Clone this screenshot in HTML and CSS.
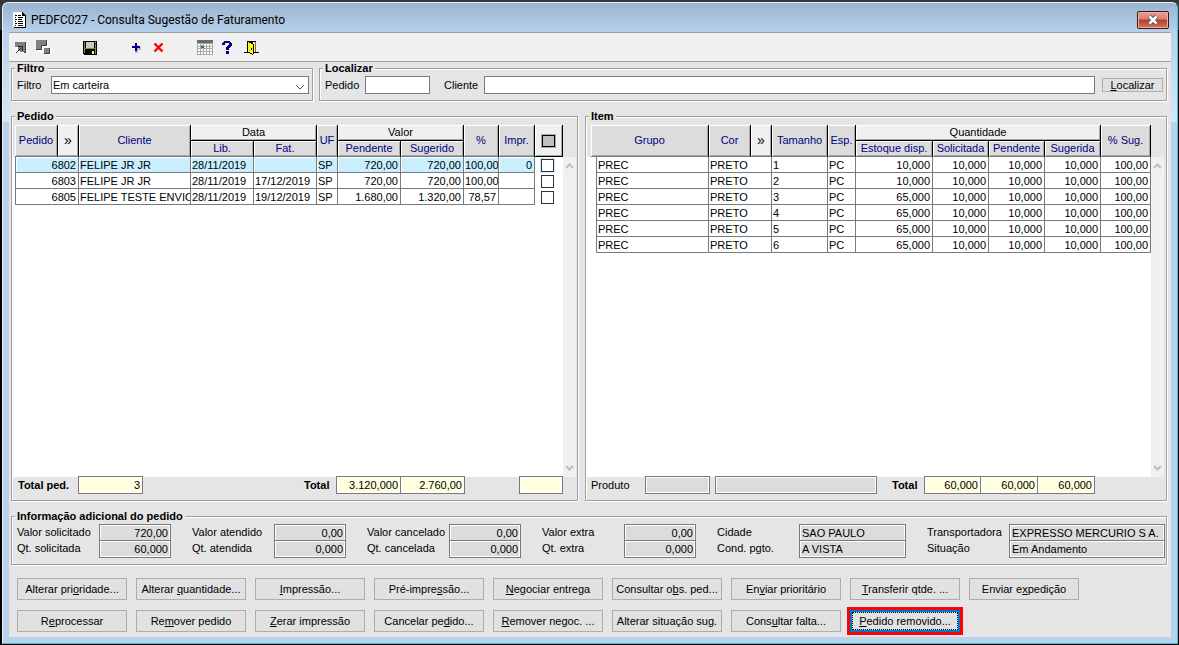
FILE: index.html
```html
<!DOCTYPE html>
<html lang="pt-BR">
<head>
    <meta charset="UTF-8">
    <meta name="viewport" content="width=device-width, initial-scale=1.0">
    <title>PEDFC027 - Consulta Sugestão de Faturamento</title>
    <link rel="stylesheet" href="styles.css">
</head>
<body>
    <div class="window">
        <header class="titlebar">
            <svg class="app-icon" width="13" height="16" viewBox="0 0 13 16" shape-rendering="crispEdges">
                <path d="M0 0h9l3 3v12H0z" fill="#fff"/>
                <path d="M9 0h1v1h1v1h1v1h1v13H1v-1h11V4H9z" fill="#000"/>
                <path d="M2 3h2v1H2zM5 3h3v1H5zM2 5h1v1H2zM5 5h5v1H5zM2 7h2v1H2zM5 7h4v1H5zM2 9h1v1H2zM5 9h5v1H5zM2 11h2v1H2zM5 11h5v1H5zM2 13h1v1H2zM5 13h5v1H5z" fill="#000"/>
            </svg>
            <h1>PEDFC027 - Consulta Sugestão de Faturamento</h1>
            <button class="close" aria-label="Fechar">
                <svg width="12" height="10" viewBox="0 0 12 10">
                    <path d="M2.500 1.500l7 7M9.500 1.500l-7 7" stroke="#4a5260" stroke-width="4.500"/>
                    <path d="M2.500 1.500l7 7M9.500 1.500l-7 7" stroke="#fff" stroke-width="2.500"/>
                </svg>
            </button>
        </header>

        <main class="client">
            <div class="toolbar">
                <div class="tool-group">
                    <button aria-label="Minimizar">
                        <svg viewBox="0 0 16 16" shape-rendering="crispEdges">
                            <path d="M3 3h11v11h-3v-1H3z" fill="#fff"/>
                            <path d="M2 2h11v11h-2l-1-1H7L2 7z" fill="#808080"/>
                            <path d="M12 2h1v11h-2v-1h1z" fill="#404040"/>
                            <path d="M3 12h1v1H3zM4 11h1v1H4zM5 10h1v1H5zM6 9h1v1H6zM7 8h1v1H7zM5 6h5v5H9V7H5z" fill="#202020"/>
                            <path d="M2 7h3v3H2zM4 12h1v1H4zM5 11h1v1H5z" fill="#fff"/>
                        </svg>
                    </button>
                    <button aria-label="Restaurar">
                        <svg viewBox="0 0 16 16" shape-rendering="crispEdges">
                            <path d="M1 1h11v6H7v5H1z" fill="#fff"/>
                            <path d="M0 0h11v6H6v4H0z" fill="#808080"/>
                            <path d="M10 0h1v6H6v4H0V9h5V5h5z" fill="#404040"/>
                            <path d="M9 9h7v6H9z" fill="#fff"/>
                            <path d="M8 8h6v6H8z" fill="#808080"/>
                            <path d="M13 8h1v6H8v-1h5z" fill="#404040"/>
                        </svg>
                    </button>
                </div>
                <div class="tool-group">
                    <button aria-label="Salvar">
                        <svg viewBox="0 0 16 16" shape-rendering="crispEdges">
                            <path d="M1 1h14v14H2l-1-1z" fill="#000"/>
                            <path d="M2 2h1v11H2zM13 4h1v10h-1zM3 8h10v1H3z" fill="#8c8c10"/>
                            <path d="M4 2h8v6H4z" fill="#c8c8c8"/>
                            <path d="M13 2h1v1h-1zM10 11h2v3h-2z" fill="#e8e8e8"/>
                        </svg>
                    </button>
                </div>
                <div class="tool-group">
                    <button aria-label="Incluir">
                        <svg viewBox="0 0 16 16" shape-rendering="crispEdges">
                            <path d="M8 5h2v2h3v3h-3v3H7v-2h1z" fill="#b4b4b4"/>
                            <path d="M7 3h2v3h3v2H9v3H7V8H4V6h3z" fill="#000080"/>
                        </svg>
                    </button>
                    <button aria-label="Excluir">
                        <svg viewBox="0 0 16 16">
                            <path d="M3.500 3.500l8 8M11.500 3.500l-8 8" stroke="#f00" stroke-width="2.400"/>
                        </svg>
                    </button>
                </div>
                <div class="tool-group">
                    <button aria-label="Calendário">
                        <svg viewBox="0 0 16 16" shape-rendering="crispEdges">
                            <path d="M0 3h16v12H0z" fill="#a8a8a8"/>
                            <path d="M0 0h16v3H0z" fill="#696969"/>
                            <path d="M1 4h2v2H1zM4 4h2v1H4zM7 4h2v2H7zM10 4h2v2h-2zM13 4h2v2h-2zM1 7h2v1H1zM7 7h2v1H7zM10 7h2v1h-2zM13 7h2v1h-2zM1 9h2v2H1zM4 9h2v2H4zM7 9h2v2H7zM10 9h2v2h-2zM13 9h2v2h-2zM1 12h2v2H1zM4 12h2v2H4zM7 12h2v2H7zM10 12h2v2h-2zM13 12h2v2h-2z" fill="#fff"/>
                            <path d="M4 6h3v2H4z" fill="#1d6fa4"/>
                        </svg>
                    </button>
                    <button aria-label="Ajuda">
                        <svg viewBox="0 0 16 16" shape-rendering="crispEdges">
                            <path d="M4 1h6v1h1v1h1v3h-1v1h-1v1H9v2H6V7h1V6h1V5h1V3H5v2H2V3h1V2h1zM6 11h3v3H6z" fill="#000080"/>
                        </svg>
                    </button>
                    <button aria-label="Sair">
                        <svg viewBox="0 0 16 16" shape-rendering="crispEdges">
                            <path d="M4 1h9v11h3v1H10v2H9v-1H7v-1H1v-1h3z" fill="#000"/>
                            <path d="M10 2h2v10h-2z" fill="#f0f0f0"/>
                            <path d="M12 2h1v10h-1z" fill="#808000"/>
                            <path d="M5 2h1v1h2v1h2v10H9v-1H7v-1H5z" fill="#ff0"/>
                            <path d="M10 4h1v10h-1zM8 8h1v2H8z" fill="#000"/>
                        </svg>
                    </button>
                </div>
            </div>

            <div class="content">
                <div class="search-row">
                    <fieldset class="search">
                        <legend>Filtro</legend>
                        <label class="w-filter" for="filtro">Filtro</label>
                        <div class="select-wrap">
                            <select id="filtro">
                                <option>Em carteira</option>
                            </select>
                            <svg width="10" height="6" viewBox="0 0 10 6"><path d="M1 1l4 4 4-4" fill="none" stroke="#555"/></svg>
                        </div>
                    </fieldset>
                    <fieldset class="search">
                        <legend>Localizar</legend>
                        <label class="w-order" for="pedido">Pedido</label>
                        <input class="box-order" id="pedido" type="text">
                        <label class="w-client" for="cliente">Cliente</label>
                        <input class="box-client" id="cliente" type="text">
                        <button class="btn find"><span><u>L</u>ocalizar</span></button>
                    </fieldset>
                </div>

                <div class="panels">
                    <fieldset class="panel orders">
                        <legend>Pedido</legend>
                        <div class="grid-area">
                            <div class="table-wrap">
                                <table>
                                    <colgroup>
                                        <col style="width: 43px"><col style="width: 21px"><col style="width: 112px"><col style="width: 63px"><col style="width: 63px"><col style="width: 21px"><col style="width: 63px"><col style="width: 63px"><col style="width: 35px"><col style="width: 36px"><col style="width: 28px">
                                    </colgroup>
                                    <thead>
                                        <tr>
                                            <th rowspan="2">Pedido</th>
                                            <th rowspan="2" class="light arrows">»</th>
                                            <th rowspan="2">Cliente</th>
                                            <th colspan="2" class="light top">Data</th>
                                            <th rowspan="2">UF</th>
                                            <th colspan="2" class="light top">Valor</th>
                                            <th rowspan="2">%</th>
                                            <th rowspan="2">Impr.</th>
                                            <th rowspan="2" class="light end"><input type="checkbox" class="check-all" aria-label="Selecionar todos"></th>
                                        </tr>
                                        <tr>
                                            <th>Lib.</th>
                                            <th>Fat.</th>
                                            <th>Pendente</th>
                                            <th>Sugerido</th>
                                        </tr>
                                    </thead>
                                    <tbody>
                                        <tr class="selected">
                                            <td colspan="2" class="num first">6802</td><td>FELIPE JR JR</td><td>28/11/2019</td><td></td><td>SP</td><td class="num">720,00</td><td class="num">720,00</td><td class="num">100,00</td><td class="num">0</td>
                                            <td class="check"><input type="checkbox" aria-label="Pedido 6802"></td>
                                        </tr>
                                        <tr>
                                            <td colspan="2" class="num first">6803</td><td>FELIPE JR JR</td><td>28/11/2019</td><td>17/12/2019</td><td>SP</td><td class="num">720,00</td><td class="num">720,00</td><td class="num">100,00</td><td class="num"></td>
                                            <td class="check"><input type="checkbox" aria-label="Pedido 6803"></td>
                                        </tr>
                                        <tr>
                                            <td colspan="2" class="num first">6805</td><td>FELIPE TESTE ENVIO C</td><td>28/11/2019</td><td>19/12/2019</td><td>SP</td><td class="num">1.680,00</td><td class="num">1.320,00</td><td class="num">78,57</td><td class="num"></td>
                                            <td class="check"><input type="checkbox" aria-label="Pedido 6805"></td>
                                        </tr>
                                    </tbody>
                                </table>
                            </div>
                            <div class="scroll">
                                <svg width="9" height="6" viewBox="0 0 9 6"><path d="M1 5l3.500-3.500L8 5" fill="none" stroke="#bfbfbf" stroke-width="2"/></svg>
                                <svg width="9" height="6" viewBox="0 0 9 6"><path d="M1 1l3.500 3.500L8 1" fill="none" stroke="#bfbfbf" stroke-width="2"/></svg>
                            </div>
                        </div>
                        <div class="totals">
                            <label class="bold w-total-orders" for="total-ped">Total ped.</label>
                            <input class="box-count num" id="total-ped" type="text" value="3" readonly>
                            <label class="bold push" for="total-pend">Total</label>
                            <input class="box-value num" id="total-pend" type="text" value="3.120,000" readonly>
                            <input class="box-value num joined" type="text" value="2.760,00" aria-label="Total sugerido" readonly>
                            <input class="box-marked num" type="text" aria-label="Total marcado" readonly>
                        </div>
                    </fieldset>

                    <fieldset class="panel items">
                        <legend>Item</legend>
                        <div class="grid-area">
                            <div class="table-wrap">
                                <table>
                                    <colgroup>
                                        <col style="width: 5px"><col style="width: 113px"><col style="width: 42px"><col style="width: 21px"><col style="width: 56px"><col style="width: 28px"><col style="width: 77px"><col style="width: 56px"><col style="width: 56px"><col style="width: 56px"><col style="width: 50px">
                                    </colgroup>
                                    <thead>
                                        <tr>
                                            <th rowspan="2" colspan="2">Grupo</th>
                                            <th rowspan="2">Cor</th>
                                            <th rowspan="2" class="light arrows">»</th>
                                            <th rowspan="2">Tamanho</th>
                                            <th rowspan="2">Esp.</th>
                                            <th colspan="4" class="light top">Quantidade</th>
                                            <th rowspan="2">% Sug.</th>
                                        </tr>
                                        <tr>
                                            <th>Estoque disp.</th>
                                            <th>Solicitada</th>
                                            <th>Pendente</th>
                                            <th>Sugerida</th>
                                        </tr>
                                    </thead>
                                    <tbody>
                                        <tr><td class="blank"></td><td class="first">PREC</td><td colspan="2">PRETO</td><td>1</td><td>PC</td><td class="num">10,000</td><td class="num">10,000</td><td class="num">10,000</td><td class="num">10,000</td><td class="num">100,00</td></tr>
                                        <tr><td class="blank"></td><td class="first">PREC</td><td colspan="2">PRETO</td><td>2</td><td>PC</td><td class="num">10,000</td><td class="num">10,000</td><td class="num">10,000</td><td class="num">10,000</td><td class="num">100,00</td></tr>
                                        <tr><td class="blank"></td><td class="first">PREC</td><td colspan="2">PRETO</td><td>3</td><td>PC</td><td class="num">65,000</td><td class="num">10,000</td><td class="num">10,000</td><td class="num">10,000</td><td class="num">100,00</td></tr>
                                        <tr><td class="blank"></td><td class="first">PREC</td><td colspan="2">PRETO</td><td>4</td><td>PC</td><td class="num">65,000</td><td class="num">10,000</td><td class="num">10,000</td><td class="num">10,000</td><td class="num">100,00</td></tr>
                                        <tr><td class="blank"></td><td class="first">PREC</td><td colspan="2">PRETO</td><td>5</td><td>PC</td><td class="num">65,000</td><td class="num">10,000</td><td class="num">10,000</td><td class="num">10,000</td><td class="num">100,00</td></tr>
                                        <tr><td class="blank"></td><td class="first">PREC</td><td colspan="2">PRETO</td><td>6</td><td>PC</td><td class="num">65,000</td><td class="num">10,000</td><td class="num">10,000</td><td class="num">10,000</td><td class="num">100,00</td></tr>
                                    </tbody>
                                </table>
                            </div>
                            <div class="scroll">
                                <svg width="9" height="6" viewBox="0 0 9 6"><path d="M1 5l3.500-3.500L8 5" fill="none" stroke="#bfbfbf" stroke-width="2"/></svg>
                                <svg width="9" height="6" viewBox="0 0 9 6"><path d="M1 1l3.500 3.500L8 1" fill="none" stroke="#bfbfbf" stroke-width="2"/></svg>
                            </div>
                        </div>
                        <div class="totals">
                            <label class="w-product" for="produto">Produto</label>
                            <input class="box-count gray" id="produto" type="text" readonly>
                            <input class="box-product gray" type="text" aria-label="Descrição do produto" readonly>
                            <label class="bold w-total-items" for="total-sol">Total</label>
                            <input class="box-qty num" id="total-sol" type="text" value="60,000" readonly>
                            <input class="box-qty num joined" type="text" value="60,000" aria-label="Total pendente" readonly>
                            <input class="box-qty num joined" type="text" value="60,000" aria-label="Total sugerida" readonly>
                        </div>
                    </fieldset>
                </div>

                <fieldset class="info">
                    <legend>Informação adicional do pedido</legend>
                    <div class="info-group">
                        <label for="v-sol">Valor solicitado</label><input class="gray num" id="v-sol" type="text" value="720,00" readonly>
                        <label for="q-sol">Qt. solicitada</label><input class="gray num" id="q-sol" type="text" value="60,000" readonly>
                    </div>
                    <div class="info-group">
                        <label for="v-ate">Valor atendido</label><input class="gray num" id="v-ate" type="text" value="0,00" readonly>
                        <label for="q-ate">Qt. atendida</label><input class="gray num" id="q-ate" type="text" value="0,000" readonly>
                    </div>
                    <div class="info-group">
                        <label for="v-can">Valor cancelado</label><input class="gray num" id="v-can" type="text" value="0,00" readonly>
                        <label for="q-can">Qt. cancelada</label><input class="gray num" id="q-can" type="text" value="0,000" readonly>
                    </div>
                    <div class="info-group">
                        <label for="v-ext">Valor extra</label><input class="gray num" id="v-ext" type="text" value="0,00" readonly>
                        <label for="q-ext">Qt. extra</label><input class="gray num" id="q-ext" type="text" value="0,000" readonly>
                    </div>
                    <div class="info-group">
                        <label for="cidade">Cidade</label><input class="gray" id="cidade" type="text" value="SAO PAULO" readonly>
                        <label for="cond">Cond. pgto.</label><input class="gray" id="cond" type="text" value="A VISTA" readonly>
                    </div>
                    <div class="info-group">
                        <label for="transp">Transportadora</label><input class="gray" id="transp" type="text" value="EXPRESSO MERCURIO S A." readonly>
                        <label for="situacao">Situação</label><input class="gray" id="situacao" type="text" value="Em Andamento" readonly>
                    </div>
                </fieldset>

                <div class="actions">
                    <button class="btn"><span>Alterar pri<u>o</u>ridade...</span></button>
                    <button class="btn"><span>Alterar <u>q</u>uantidade...</span></button>
                    <button class="btn"><span><u>I</u>mpressão...</span></button>
                    <button class="btn"><span>Pré-impre<u>s</u>são...</span></button>
                    <button class="btn"><span><u>N</u>egociar entrega</span></button>
                    <button class="btn"><span>Consultar o<u>b</u>s. ped...</span></button>
                    <button class="btn"><span>En<u>v</u>iar prioritário</span></button>
                    <button class="btn"><span><u>T</u>ransferir qtde. ...</span></button>
                    <button class="btn"><span>Enviar e<u>x</u>pedição</span></button>
                    <button class="btn"><span>R<u>e</u>processar</span></button>
                    <button class="btn"><span>Re<u>m</u>over pedido</span></button>
                    <button class="btn"><span><u>Z</u>erar impressão</span></button>
                    <button class="btn"><span>Cancelar pe<u>d</u>ido...</span></button>
                    <button class="btn"><span><u>R</u>emover negoc. ...</span></button>
                    <button class="btn"><span>Alterar situação su<u>g</u>.</span></button>
                    <button class="btn"><span>Cons<u>u</u>ltar falta...</span></button>
                    <button class="btn focused"><span><u>P</u>edido removido...</span></button>
                </div>
            </div>
        </main>
    </div>
</body>
</html>
```

FILE: styles.css
```css
* {
    box-sizing: border-box;
}
body {
    margin: 0;
    min-height: 100vh;
    display: flex;
    padding: 2px 1px 1px 2px;
    background: linear-gradient(#383838 30px, #000 30px);
    font-family: "Liberation Sans", Arial, sans-serif;
    font-size: 11px;
    line-height: 13px;
    color: #000;
}
button, input, select {
    font: inherit;
    color: inherit;
    margin: 0;
    border-radius: 0;
}
.window {
    flex: 1;
    min-width: 0;
    display: flex;
    flex-direction: column;
    padding: 0 6px 6px;
    border: 1px solid #e6f0fa;
    border-right-color: #35c5e8;
    border-bottom-color: #35c5e8;
    border-radius: 6px 6px 0 0;
    background: linear-gradient(#99b4d1 0, #b9d1ea 30px, #d7e6f6 119px, #b9d1ea 119px);
}

/* title bar */
.titlebar {
    display: flex;
    align-items: center;
    height: 29px;
    padding: 4px 2px 0 4px;
}
.titlebar h1 {
    flex: 1;
    margin: 0 0 0 5px;
    font: 12px/16px Roboto, sans-serif;
}
.close {
    width: 32px;
    height: 18px;
    padding: 0;
    display: flex;
    align-items: center;
    justify-content: center;
    border: 1px solid #43141a;
    border-radius: 2px;
    background: linear-gradient(#e5a193 0, #d4806f 45%, #b93a22 50%, #cf7863 100%);
    box-shadow: inset 0 0 0 1px #e9b3a6;
}

/* toolbar */
.client {
    flex: 1;
    display: flex;
    flex-direction: column;
    border-top: 1px solid #a0a0a0;
    background: #e5e5e5;
}
.toolbar {
    display: flex;
    gap: 30px;
    padding: 7px 4px 5px;
    background: #f0f0f0;
    border-bottom: 1px solid #a0a0a0;
}
.tool-group {
    display: flex;
    gap: 7px;
}
.toolbar button {
    width: 16px;
    height: 16px;
    padding: 0;
    border: 0;
    background: none;
}
.toolbar svg {
    display: block;
    width: 16px;
    height: 16px;
}

/* group boxes */
.content {
    flex: 1;
    display: flex;
    flex-direction: column;
    padding: 0 4px 5px 2px;
}
fieldset {
    min-width: 0;
    margin: 0;
    padding: 0;
    border: 1px solid #a0a0a0;
    box-shadow: 1px 1px 0 #fff, inset 1px 1px 0 #fff;
}
legend {
    margin-left: 3px;
    padding: 0 2px;
    font-weight: bold;
    background: #e5e5e5;
}
.search legend, .info legend {
    margin-left: -2px;
}
.bold {
    font-weight: bold;
}
input[type="text"], select {
    height: 18px;
    padding: 0 2px;
    border: 1px solid #7a7a7a;
    background: #fff;
    outline: none;
}
.search-row {
    display: grid;
    grid-template-columns: 302fr 848fr;
    gap: 6px;
    margin-bottom: 9px;
}
.search {
    display: flex;
    align-items: center;
    padding: 1px 3px 6px 5px;
}
.w-filter {
    width: 34px;
}
.w-order {
    width: 40px;
}
.box-order {
    width: 65px;
}
.w-client {
    width: 54px;
    padding-left: 14px;
}
.box-client {
    flex: 1;
    min-width: 0;
}
.select-wrap {
    position: relative;
    flex: 1;
    display: flex;
}
.select-wrap select {
    width: 100%;
    padding: 0 1px;
    appearance: none;
}
.select-wrap svg {
    position: absolute;
    right: 4px;
    top: 8px;
    pointer-events: none;
}

/* grids */
.panels {
    flex: 1;
    display: grid;
    grid-template-columns: 567fr 582fr;
    gap: 7px;
    margin-bottom: 9px;
}
.panel {
    display: flex;
    flex-direction: column;
    padding: 2px 1px 6px 0;
}
.items {
    padding-right: 2px;
}
.grid-area {
    flex: 1;
    display: flex;
    margin-left: 1px;
    padding-left: 2px;
    background: linear-gradient(#e5e5e5 32px, #fff 32px);
}
.items .grid-area {
    padding-left: 4px;
}
.table-wrap {
    flex: 1;
    min-width: 0;
}
table {
    width: 100%;
    table-layout: fixed;
    border-spacing: 0;
}
th, td {
    height: 16px;
    padding: 0;
    overflow: hidden;
    white-space: nowrap;
    border-right: 1px solid #7a7a7a;
    border-bottom: 1px solid #7a7a7a;
}
th {
    font-weight: normal;
    color: #000080;
    background: #dcdcdc;
    border-right-color: #000;
    box-shadow: inset 1px 1px 0 #fff, inset -1px -1px 0 #a8a8a8;
}
th.light {
    color: #000;
    background: #f0f0f0;
}
th.top, th.end {
    border-bottom-color: #000;
}
th.arrows {
    font-size: 14px;
}
td {
    padding: 2px 1px 0;
    background: #fff;
}
.first {
    border-left: 1px solid #7a7a7a;
}
td.blank, td.check {
    padding: 0;
    border: 0;
    background: none;
}
.num {
    text-align: right;
}
td.num {
    padding-right: 2px;
}
.selected td {
    background: #c9effe;
    box-shadow: inset 1px 1px 0 #fff;
}
td.check, .selected td.check {
    padding-right: 3px;
    text-align: center;
    line-height: 0;
    background: none;
    box-shadow: none;
}
input[type="checkbox"] {
    appearance: none;
    display: block;
    width: 13px;
    height: 13px;
    margin: 0 auto;
    border: 1px solid #333;
    background: #fff;
}
.selected input[type="checkbox"] {
    box-shadow: 0 0 0 1px #c9effe;
}
input.check-all {
    height: 12px;
    background: #c0c0c0;
    border-color: #000;
    box-shadow: 0 0 0 1px #a8a8a8;
}
.scroll {
    width: 13px;
    margin-top: 32px;
    padding: 6px 0;
    display: flex;
    flex-direction: column;
    align-items: center;
    justify-content: space-between;
    background: #f0f0f0;
}

/* totals */
.totals {
    display: flex;
    align-items: center;
    padding-left: 6px;
    margin-top: -1px;
}
.totals input {
    background: #ffffe1;
    box-shadow: inset 0 0 0 1px #fff;
}
input.gray, .totals .gray {
    background: #dcdcdc;
    box-shadow: inset 0 0 0 1px #fff;
}
.totals .joined {
    margin-left: -1px;
}
.w-total-orders {
    width: 60px;
}
.box-count {
    width: 65px;
}
.push {
    width: 32px;
    margin-left: auto;
}
.box-value {
    width: 65px;
}
.box-marked {
    width: 44px;
    margin: 0 13px 0 54px;
}
.items .totals {
    padding-left: 5px;
    padding-right: 69px;
}
.w-product {
    width: 54px;
}
.box-product {
    flex: 1;
    min-width: 0;
    margin: 0 15px 0 5px;
}
.w-total-items {
    width: 32px;
}
.box-qty {
    width: 57px;
}
.box-qty.joined {
    width: 58px;
}

/* order details */
.info {
    display: grid;
    grid-template-columns: 175fr 175fr 175fr 175fr 210fr 238fr;
    padding: 1px 1px 8px 5px;
}
.info-group {
    display: grid;
    grid-template-columns: 82px 1fr;
    grid-auto-rows: 16px;
    padding-right: 21px;
    line-height: 16px;
}
.info-group:last-child {
    padding-right: 0;
}
.info-group input {
    width: 100%;
    min-width: 0;
}

/* buttons */
.btn {
    height: 22px;
    padding: 0;
    border: 1px solid #adadad;
    background: #e1e1e1;
    white-space: nowrap;
}
.find {
    width: 61px;
    height: 14px;
    margin-left: 7px;
    line-height: 12px;
}
.actions {
    display: grid;
    grid-template-columns: repeat(9, 110px);
    gap: 10px 9px;
    margin-top: 13px;
    padding-left: 6px;
}
.focused {
    border: 2px solid #0078d7;
    outline: 3px solid #f00;
}
.focused span {
    display: block;
    height: 18px;
    line-height: 16px;
    border: 1px dotted #000;
}
```
